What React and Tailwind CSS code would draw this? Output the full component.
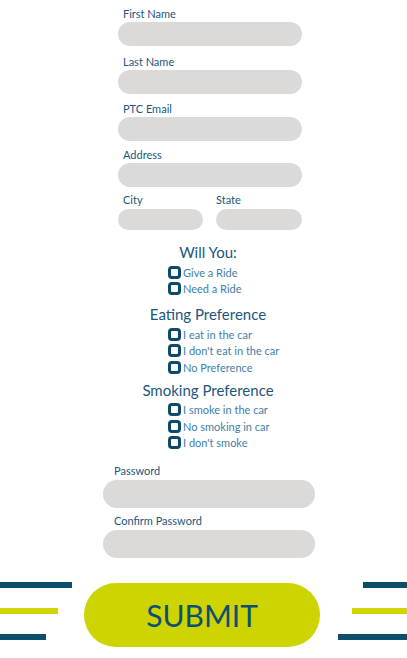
import React from "react";

const Field = ({ label, className = "", inputClass = "h-[24px]", labelClass = "pl-[5px]" }) => (
  <div className={className}>
    <div className={`h-[14px] leading-[14px] text-[11px] text-[#1a577d] ${labelClass}`}>{label}</div>
    <div className={`mt-[1px] rounded-full bg-[#dcd9d9] ${inputClass}`} />
  </div>
);

const Check = ({ label }) => (
  <div className="flex items-center h-[16.5px]">
    <span className="w-[13px] h-[13px] border-[3px] border-[#0c4a6b] rounded-[4px] bg-white shrink-0" />
    <span className="ml-[2px] text-[11px] leading-none text-[#3f7ea8]">{label}</span>
  </div>
);

const Group = ({ title, items, className = "" }) => (
  <div className={className}>
    <h3 className="h-[18px] leading-[18px] text-[15px] text-center text-[#1a577d] pl-[9px]">{title}</h3>
    <div className="mt-[3px] ml-[168px]">
      {items.map((t) => (
        <Check key={t} label={t} />
      ))}
    </div>
  </div>
);

const Lines = ({ align }) => {
  const widths = align === "left" ? ["w-[72px]", "w-[58px]", "w-[46px]"] : ["w-[44px]", "w-[55px]", "w-[69px]"];
  return (
    <div className={`flex flex-col gap-[20px] ${align === "left" ? "items-start" : "items-end"}`}>
      <div className={`h-[6px] bg-[#0b4f6c] ${widths[0]}`} />
      <div className={`h-[6px] bg-[#cfd600] ${widths[1]}`} />
      <div className={`h-[6px] bg-[#0b4f6c] ${widths[2]}`} />
    </div>
  );
};

export default function App() {
  return (
    <div className="w-[407px] h-[658px] bg-white overflow-hidden" style={{ fontFamily: "Lato, 'Open Sans', sans-serif" }}>
      {/* Name / address block */}
      <div className="pt-[7px] ml-[118px] w-[184px]">
        <Field label="First Name" />
        <Field label="Last Name" className="mt-[9px]" />
        <Field label="PTC Email" className="mt-[8px]" />
        <Field label="Address" className="mt-[7px]" />
        <div className="mt-[6px] flex gap-[13px]">
          <Field label="City" className="w-[85px]" inputClass="h-[21px] mt-[2px]" />
          <Field label="State" className="flex-1" inputClass="h-[21px] mt-[2px]" labelClass="pl-0" />
        </div>
      </div>

      {/* Preferences */}
      <Group title="Will You:" items={["Give a Ride", "Need a Ride"]} className="mt-[13px]" />
      <Group title="Eating Preference" items={["I eat in the car", "I don't eat in the car", "No Preference"]} className="mt-[8px]" />
      <Group title="Smoking Preference" items={["I smoke in the car", "No smoking in car", "I don't smoke"]} className="mt-[5px]" />

      {/* Password block */}
      <div className="mt-[13px] ml-[103px] w-[212px]">
        <Field label="Password" inputClass="h-[28px] mt-[2px]" labelClass="pl-[11px]" />
        <Field label="Confirm Password" className="mt-[6px]" inputClass="h-[28px] mt-[2px]" labelClass="pl-[11px]" />
      </div>

      {/* Submit */}
      <div className="mt-[24px] flex items-start">
        <Lines align="left" />
        <button className="ml-[12px] mt-[1px] w-[236px] h-[64px] rounded-full bg-[#cdd400] text-[30px] text-[#0d4f73] shrink-0">
          SUBMIT
        </button>
        <div className="flex-1">
          <Lines align="right" />
        </div>
      </div>
    </div>
  );
}
